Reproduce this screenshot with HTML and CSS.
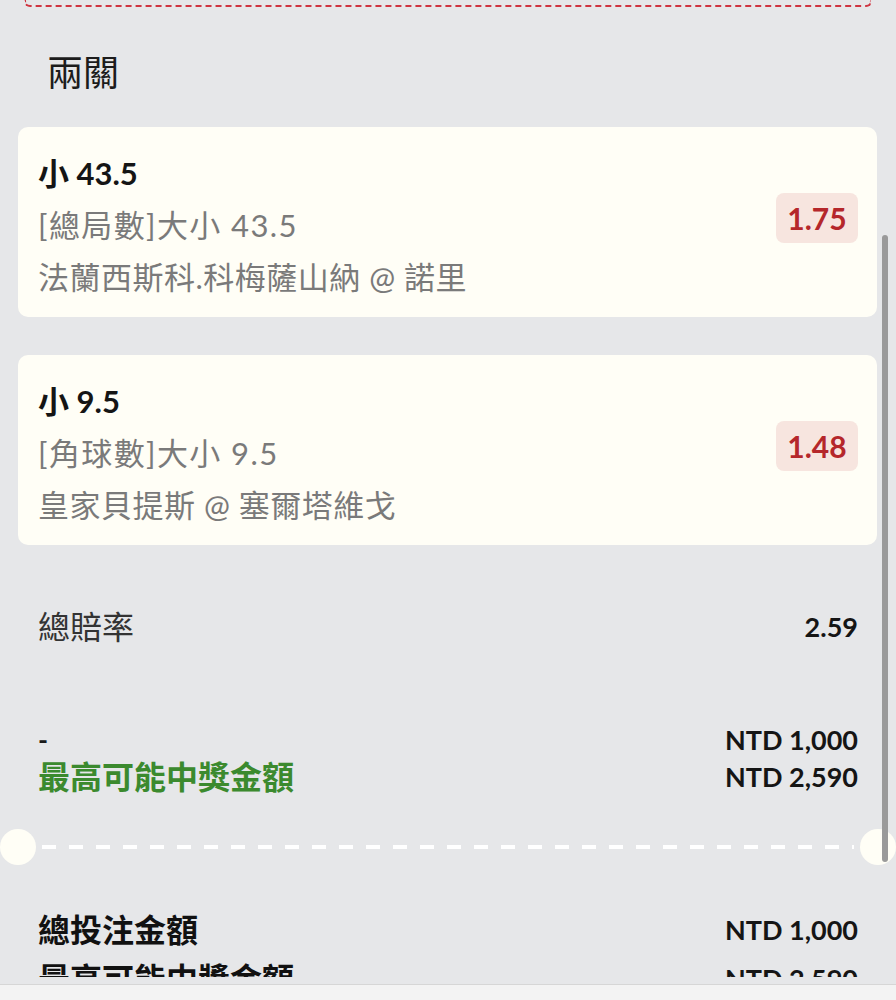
FILE: index.html
```html
<!DOCTYPE html>
<html lang="zh-Hant">
<head>
  <meta charset="UTF-8" />
  <title>兩關</title>
  <link rel="stylesheet" href="styles.css">
</head>
<body>

  <div class="sheet">
    <div class="prev-ticket"></div>

    <h2 class="leg-title">兩關</h2>

    <div class="bet-list">
      <div class="bet-card">
        <div class="bet-info">
          <div class="bet-pick">小 43.5</div>
          <div class="bet-market">[總局數]大小 43.5</div>
          <div class="bet-match">法蘭西斯科.科梅薩山納 @ 諾里</div>
        </div>
        <div class="odds">1.75</div>
      </div>

      <div class="bet-card">
        <div class="bet-info">
          <div class="bet-pick">小 9.5</div>
          <div class="bet-market">[角球數]大小 9.5</div>
          <div class="bet-match">皇家貝提斯 @ 塞爾塔維戈</div>
        </div>
        <div class="odds">1.48</div>
      </div>
    </div>

    <div class="summary-row odds-row">
      <span class="label">總賠率</span>
      <span class="value">2.59</span>
    </div>

    <div class="summary-row payout-row">
      <div class="col-left">
        <div class="dash-label">-</div>
        <div class="win-label">最高可能中獎金額</div>
      </div>
      <div class="col-right">
        <div class="value">NTD 1,000</div>
        <div class="value">NTD 2,590</div>
      </div>
    </div>

    <div class="divider">
      <span class="notch"></span>
      <span class="dash-line"></span>
      <span class="notch"></span>
    </div>

    <div class="totals">
      <div class="total-row">
        <span class="total-label">總投注金額</span>
        <span class="value">NTD 1,000</span>
      </div>
      <div class="total-row">
        <span class="total-label">最高可能中獎金額</span>
        <span class="value">NTD 2,590</span>
      </div>
    </div>

    <div class="scrollbar"></div>
  </div>

  <div class="bottom-bar"></div>

</body>
</html>
```

FILE: styles.css
```css
body {
  font-family: 'Lato', 'Noto Sans CJK TC', sans-serif;
  background: #e6e7e9;
  margin: 0;
  color: #1a1a1a;
  overflow: hidden;
}

.sheet {
  position: relative;
  height: 977px;
  overflow: hidden;
}

/* bottom of the previous ticket */
.prev-ticket {
  height: 5px;
  margin: 0 24px;
  border: 2px dashed #cf3440;
  border-top: none;
  border-radius: 0 0 6px 6px;
}

.leg-title {
  margin: 41px 0 0 47px;
  font-size: 36px;
  line-height: 48px;
  font-weight: 400;
  color: #1c1c1c;
}

.bet-list {
  display: flex;
  flex-direction: column;
  gap: 38px;
  margin: 31px 19px 0 18px;
}

.bet-card {
  display: flex;
  align-items: center;
  justify-content: space-between;
  background: #fffef6;
  border-radius: 10px;
  padding: 20px 19px 14px 20px;
}

.bet-info {
  font-size: 31px;
  line-height: 52px;
}

.bet-pick {
  font-weight: 700;
  color: #151515;
}

.bet-market,
.bet-match {
  color: #7a7a7a;
}

.bet-market {
  letter-spacing: 1.4px;
}

.bet-match {
  letter-spacing: 0.5px;
}

.odds {
  width: 82px;
  height: 50px;
  margin-top: -14px;
  line-height: 50px;
  text-align: center;
  background: #f7e5df;
  border-radius: 8px;
  color: #b5272b;
  font-size: 30px;
  font-weight: 700;
}

.summary-row {
  display: flex;
  justify-content: space-between;
  padding: 0 38px;
}

.odds-row {
  margin-top: 60px;
  line-height: 44px;
}

.odds-row .label {
  font-size: 32px;
  color: #333;
}

.value {
  font-size: 27px;
  font-weight: 700;
  color: #151515;
}

.payout-row {
  margin-top: 72px;
  line-height: 37px;
}

.col-right {
  text-align: right;
}

.dash-label {
  font-size: 27px;
  font-weight: 700;
}

.win-label {
  font-size: 32px;
  font-weight: 700;
  color: #3b8a2e;
}

/* ticket tear line */
.divider {
  display: flex;
  align-items: center;
  margin-top: 34px;
  height: 36px;
}

.notch {
  width: 36px;
  height: 36px;
  border-radius: 50%;
  background: #fffef6;
  flex: none;
}

.dash-line {
  flex: 1;
  height: 4px;
  margin: 0 6px;
  background: repeating-linear-gradient(90deg, #ffffff 0 14px, transparent 14px 27px);
}

.totals {
  margin-top: 40px;
  padding: 0 38px;
}

.total-row {
  display: flex;
  justify-content: space-between;
  line-height: 49px;
}

.total-label {
  font-size: 32px;
  font-weight: 700;
  color: #111;
}

.scrollbar {
  position: absolute;
  left: 882px;
  top: 235px;
  width: 6px;
  height: 627px;
  border-radius: 3px;
  background: #9a9a9a;
}

.bottom-bar {
  margin-top: 7px;
  height: 16px;
  background: #f3f3f3;
  border-top: 1px solid #d6d6d6;
}
```
